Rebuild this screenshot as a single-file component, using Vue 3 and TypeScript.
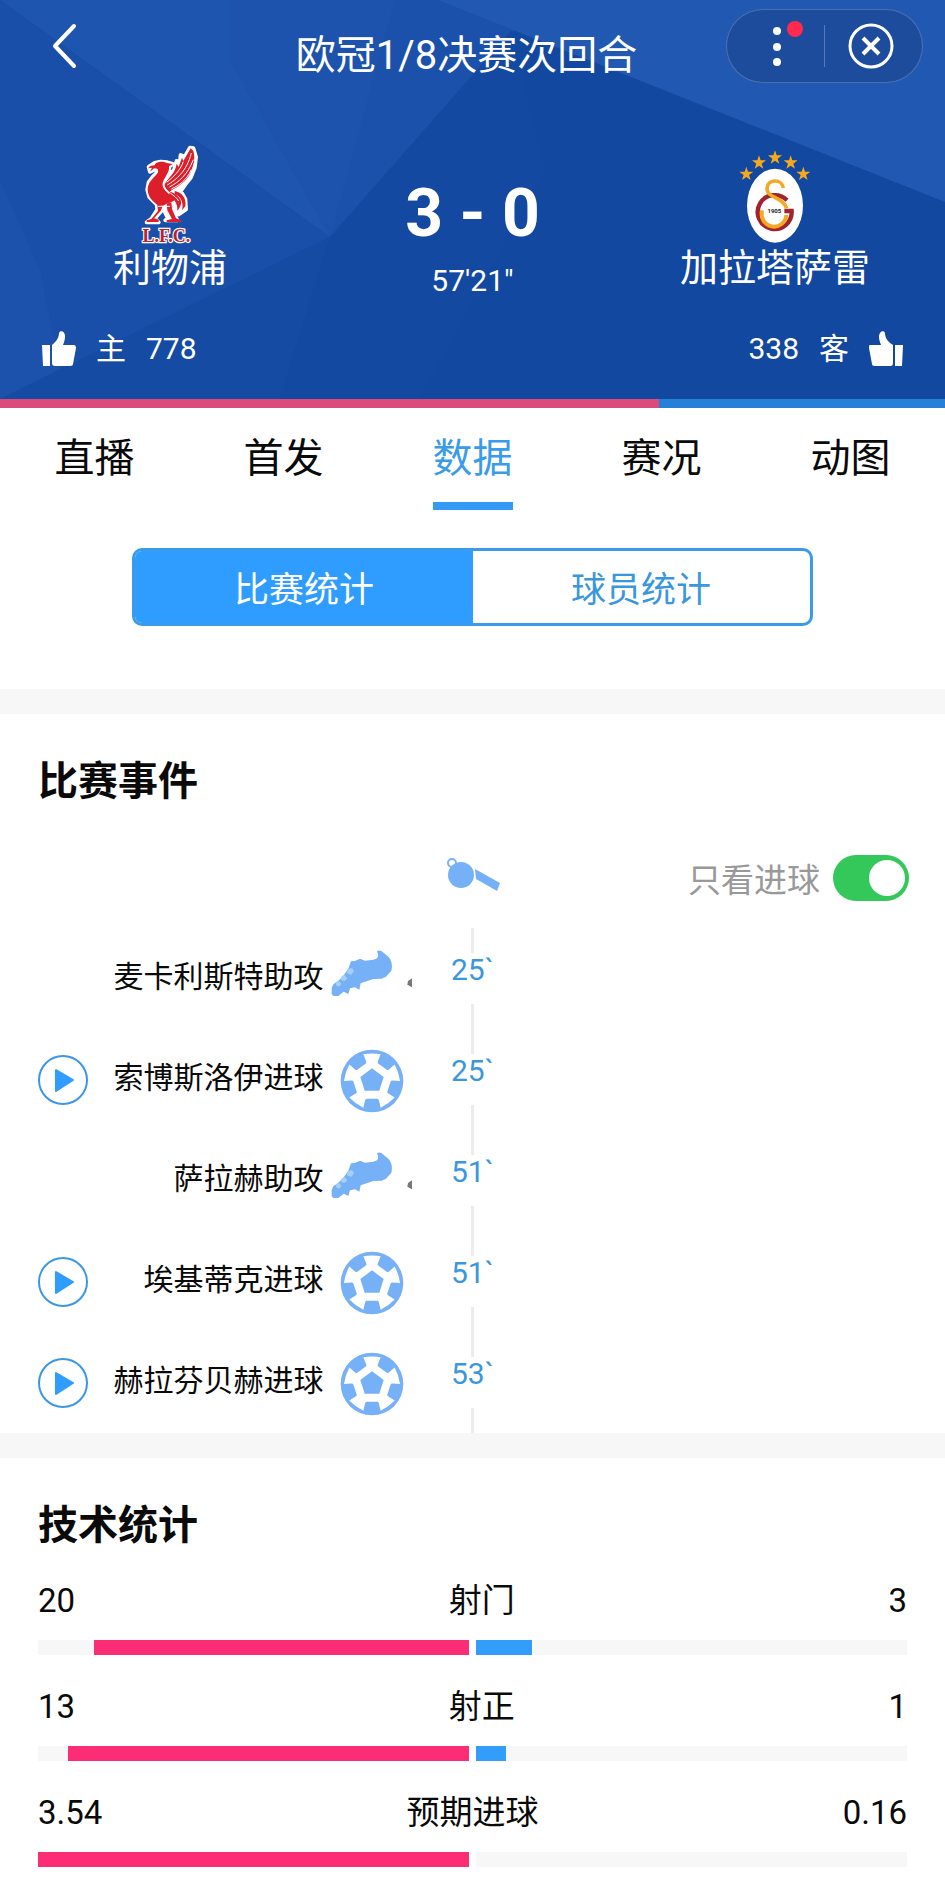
<script setup lang="ts">
import { ref } from 'vue'

interface MatchEvent {
  id: number
  text: string
  kind: 'goal' | 'assist'
  minute: number
}

interface Stat {
  label: string
  home: string
  away: string
  homeShare: number
  awayShare: number
}

const tabs: string[] = ['直播', '首发', '数据', '赛况', '动图']
const activeTab = ref('数据')

const views: string[] = ['比赛统计', '球员统计']
const activeView = ref('比赛统计')

const goalsOnly = ref(true)
const homeVotes = ref(778)
const awayVotes = ref(338)

const events: MatchEvent[] = [
  { id: 1, text: '麦卡利斯特助攻', kind: 'assist', minute: 25 },
  { id: 2, text: '索博斯洛伊进球', kind: 'goal', minute: 25 },
  { id: 3, text: '萨拉赫助攻', kind: 'assist', minute: 51 },
  { id: 4, text: '埃基蒂克进球', kind: 'goal', minute: 51 },
  { id: 5, text: '赫拉芬贝赫进球', kind: 'goal', minute: 53 },
]

const stats: Stat[] = [
  { label: '射门', home: '20', away: '3', homeShare: 87, awayShare: 13 },
  { label: '射正', home: '13', away: '1', homeShare: 93, awayShare: 7 },
  { label: '预期进球', home: '3.54', away: '0.16', homeShare: 100, awayShare: 0 },
]

const stars: string[] = ['106 129', '144 95', '192 80', '239 95', '277 129']
const spokes: number[] = [0, 72, 144, 216, 288]
</script>

<template>
  <div class="page">
    <header class="hero">
      <svg class="facets" viewBox="0 0 945 399" preserveAspectRatio="none" aria-hidden="true">
        <rect width="945" height="399" fill="#1248a0" />
        <path d="M330 237L0 399H280Z" fill="#164ba4" />
        <path d="M0 0L330 237L0 399Z" fill="#1a4fa9" />
        <path d="M0 180L40 270L60 369L0 399Z" fill="#1c52ab" />
        <path d="M0 0H440L515 30L330 237Z" fill="#1e55ae" />
        <path d="M230 60L330 237L395 0H230Z" fill="#1d53ad" />
        <path d="M395 0H440L515 30L330 237Z" fill="#1b51ab" />
        <path d="M512 30L525 90L545 170L420 399H280L330 237Z" fill="#1349a1" />
        <path d="M438 0H945V202Z" fill="#2158b1" />
      </svg>

      <div class="bar">
        <button class="back" type="button" aria-label="返回">
          <svg width="26" height="48" viewBox="0 0 26 48" aria-hidden="true">
            <path d="M23 4L4 24L23 44" fill="none" stroke="#fff" stroke-width="4" stroke-linecap="round" stroke-linejoin="round" />
          </svg>
        </button>
        <h1 class="title">欧冠1/8决赛次回合</h1>
        <div class="capsule">
          <button class="cap-btn" type="button" aria-label="更多">
            <svg width="97" height="72" viewBox="0 0 97 72" aria-hidden="true">
              <g fill="#fff">
                <circle cx="50" cy="21" r="4" />
                <circle cx="50" cy="37" r="4" />
                <circle cx="50" cy="52" r="4" />
              </g>
              <circle cx="68" cy="19" r="8" fill="#ff2a4d" />
            </svg>
          </button>
          <span class="cap-line"></span>
          <button class="cap-btn" type="button" aria-label="关闭">
            <svg width="97" height="72" viewBox="0 0 97 72" aria-hidden="true">
              <g fill="none" stroke="#fff">
                <circle cx="46" cy="36" r="21" stroke-width="3" />
                <path d="M38 28L54 44M54 28L38 44" stroke-width="4" />
              </g>
            </svg>
          </button>
        </div>
      </div>

      <div class="match">
        <div class="team">
          <svg width="60" height="102" viewBox="96 42 180 306" role="img" aria-label="利物浦队徽">
            <g stroke-linejoin="round">
              <path d="M140 96L158 92L178 94L194 99L184 106C184 120 176 132 166 142L198 118L206 90L216 94L218 72L230 78L246 50L256 52L264 78L260 110L248 140L232 160L218 180L232 205L234 235L212 250L204 234L194 216L180 222L192 236L208 268H172L180 262L164 228L160 240L140 262L152 274H116L130 264L148 236L146 220L124 198L118 176L122 154L136 136L150 122L148 112L126 122L122 108Z" fill="#fff" stroke="#fff" stroke-width="12" />
              <g fill="#dc1f2b">
                <path d="M142 98C152 90 168 92 176 96L194 99L183 106C186 124 168 140 164 156C162 170 172 180 184 190L202 206C190 214 182 216 176 218L166 224H152C134 212 120 198 119 176C119 154 136 142 146 130C151 124 152 118 148 113L138 112L126 122L132 110L120 112L128 104L140 103Z" />
                <path d="M170 160C180 140 202 128 206 98L212 108L222 80L226 90L248 52L256 60C262 82 258 98 250 118C244 138 230 152 216 162C204 172 192 174 184 184C176 178 170 172 170 160Z" />
                <path d="M184 182C196 184 208 190 216 204C224 216 216 230 208 240C210 220 200 204 184 194ZM200 180C222 184 236 202 232 226L222 238C228 214 218 196 200 188Z" />
                <path d="M148 220L164 226L158 240L138 262L152 266V273H116V268L130 264L150 240ZM176 218L190 214L192 234L204 262L220 268V273H176V268L192 264L178 238Z" />
              </g>
              <g fill="none" stroke="#fff" stroke-width="3">
                <path d="M178 162C204 146 236 122 250 66M184 168C212 154 238 132 256 86M190 174C212 164 236 148 250 116M176 154C196 138 216 120 226 92M170 168C176 184 200 190 212 210M150 226H186" />
              </g>
            </g>
            <text class="crest-name" x="175" y="332" text-anchor="middle">L.F.C.</text>
          </svg>
          <span class="team-name">利物浦</span>
        </div>
        <div class="result">
          <strong class="score">3 - 0</strong>
          <span class="clock">57'21"</span>
        </div>
        <div class="team">
          <svg width="72" height="102" viewBox="84 42 216 306" role="img" aria-label="加拉塔萨雷队徽">
            <g fill="#f8a91b">
              <path v-for="s in stars" :key="s" :transform="`translate(${s})`" d="M0 -22L5 -7H21L8 3L13 18L0 9L-13 18L-8 3L-21 -7H-5Z" />
            </g>
            <ellipse cx="192" cy="224" rx="84" ry="111" fill="#fff" />
            <g fill="none">
              <path d="M228 208A51 51 0 1 0 242 240H220" stroke="#a02430" stroke-width="13" />
              <path d="M154 238A37 37 0 1 0 226 252" stroke="#f6a822" stroke-width="12" />
              <path d="M217 171C214 144 170 142 168 172C167 202 216 196 227 232" stroke="#f6a822" stroke-width="11" />
            </g>
            <text class="crest-year" x="190" y="246" text-anchor="middle">1905</text>
          </svg>
          <span class="team-name">加拉塔萨雷</span>
        </div>
      </div>

      <div class="votes">
        <button class="vote" type="button" @click="homeVotes++">
          <svg width="34" height="36" viewBox="0 0 34 36" fill="#fff" aria-hidden="true">
            <path d="M0 14H8V35H1ZM10 14C15 10 17 6 17 2C18 -1 23 0 23 5C23 9 22 11 21 14H32C33 14 34 15 34 17L31 33C31 34 30 35 28 35H13C11 35 10 34 10 32Z" />
          </svg>
          <span>主</span>
          <span>{{ homeVotes }}</span>
        </button>
        <button class="vote" type="button" @click="awayVotes++">
          <span>{{ awayVotes }}</span>
          <span>客</span>
          <svg width="34" height="36" viewBox="0 0 34 36" fill="#fff" aria-hidden="true">
            <path d="M26 14H34L33 35H26ZM24 14C19 11 16 7 16 2C15 -1 10 0 10 6C10 9 11 11 12 14H1C0 14 0 15 0 17L3 33C3 34 4 35 6 35H22C23 35 24 34 24 32Z" />
          </svg>
        </button>
      </div>
    </header>

    <div class="share">
      <span class="share-home" :style="{ flexGrow: homeVotes }"></span>
      <span class="share-away" :style="{ flexGrow: awayVotes }"></span>
    </div>

    <nav class="tabs">
      <button
        v-for="t in tabs"
        :key="t"
        type="button"
        class="tab"
        :class="{ active: t === activeTab }"
        @click="activeTab = t"
      >
        <span>{{ t }}</span>
      </button>
    </nav>

    <div class="switcher">
      <button
        v-for="v in views"
        :key="v"
        type="button"
        class="segment"
        :class="{ active: v === activeView }"
        @click="activeView = v"
      >
        {{ v }}
      </button>
    </div>

    <section class="section">
      <h2 class="heading">比赛事件</h2>
      <div class="row filter-row">
        <svg class="whistle" width="54" height="42" viewBox="0 0 54 42" fill="#76b1f7" aria-hidden="true">
          <circle cx="6" cy="6" r="4" fill="none" stroke="#76b1f7" stroke-width="2" />
          <circle cx="15" cy="18" r="13" />
          <path d="M29 12L54 26L51 34L30 22Z" />
        </svg>
        <label class="filter" for="goals-only">
          <span>只看进球</span>
          <input id="goals-only" v-model="goalsOnly" class="toggle" type="checkbox" role="switch" />
        </label>
      </div>
      <div v-for="e in events" :key="e.id" class="row event">
        <div class="side">
          <button v-if="e.kind === 'goal'" class="play" type="button" :aria-label="`播放${e.text}`">
            <svg width="52" height="52" viewBox="0 0 52 52" aria-hidden="true">
              <circle cx="26" cy="26" r="24" fill="none" stroke="#3a97e6" stroke-width="2" />
              <path d="M19 16L36 26L19 37Z" fill="#2f9dff" stroke="#2f9dff" stroke-width="2" stroke-linejoin="round" />
            </svg>
          </button>
          <span class="what">{{ e.text }}</span>
          <svg v-if="e.kind === 'goal'" class="kind" width="82" height="66" viewBox="0 0 246 198" aria-hidden="true">
            <g transform="translate(126 102)">
              <circle r="94" fill="#76b1f7" />
              <path d="M0 -66L63 -20L39 53H-39L-63 -20Z" fill="#fff" />
              <path v-for="a in spokes" :key="a" :transform="`rotate(${a})`" d="M-26 -80Q0 -85 26 -80L17 -58V-42H-17V-58Z" fill="#fff" />
              <path d="M0 -38L35 -12L22 29H-22L-35 -12Z" fill="#76b1f7" />
            </g>
          </svg>
          <svg v-else class="kind" width="82" height="66" viewBox="0 0 246 198" aria-hidden="true">
            <path d="M5 126L10 115L25 104L40 89L55 68L63 46L75 45L90 38L105 44L130 41C143 38 146 32 144 24L141 16Q148 11 155 16L175 32C186 44 188 60 184 74L168 92L155 98L130 99L92 112L88 131L75 124L60 127L55 144L41 137L25 150H10L5 144Z" fill="#76b1f7" />
            <path d="M53 70L66 66L72 76L63 87L51 82ZM35 90L45 88L52 98L43 105L33 102ZM19 108L28 106L34 114L27 122L18 118Z" fill="#a6d0fc" />
            <path d="M246 97L234 105L232 116L246 124Z" fill="#777" />
          </svg>
        </div>
        <div class="axis">
          <time class="minute">{{ e.minute }}`</time>
        </div>
      </div>
    </section>

    <section class="section">
      <h2 class="heading">技术统计</h2>
      <div v-for="s in stats" :key="s.label" class="stat">
        <div class="figures">
          <span>{{ s.home }}</span>
          <span>{{ s.label }}</span>
          <span>{{ s.away }}</span>
        </div>
        <div class="meters">
          <div class="meter home"><div class="fill" :style="{ width: s.homeShare + '%' }"></div></div>
          <div class="meter away"><div class="fill" :style="{ width: s.awayShare + '%' }"></div></div>
        </div>
      </div>
    </section>
  </div>
</template>

<style>
body {
  margin: 0;
  background: #fff;
}
</style>

<style scoped>
.page {
  font-family: Roboto, 'Noto Sans CJK SC', sans-serif;
  color: #0a0a0a;
  background: #fff;
}
button {
  margin: 0;
  padding: 0;
  border: 0;
  background: none;
  color: inherit;
  font: inherit;
  cursor: pointer;
}
svg {
  display: block;
  flex: none;
}
h1,
h2 {
  margin: 0;
}

.hero {
  position: relative;
  isolation: isolate;
  color: #fff;
}
.facets {
  position: absolute;
  inset: 0;
  z-index: -1;
  width: 100%;
  height: 100%;
}
.bar {
  display: grid;
  grid-template-columns: 1fr auto 1fr;
  align-items: center;
  padding: 8px 22px 0;
  height: 76px;
}
.back {
  justify-self: start;
  padding-left: 29px;
}
.title {
  font-size: 40px;
  font-weight: 400;
  line-height: 48px;
  padding: 20px 12px 0 0;
}
.capsule {
  justify-self: end;
  display: flex;
  align-items: center;
  border: 1px solid rgba(255, 255, 255, 0.2);
  border-radius: 38px;
  background: rgba(24, 50, 110, 0.3);
}
.cap-line {
  width: 1px;
  height: 42px;
  background: rgba(255, 255, 255, 0.25);
}
.match {
  display: grid;
  grid-template-columns: 36fr 28fr 36fr;
  padding-top: 61px;
}
.team,
.result {
  display: flex;
  flex-direction: column;
  align-items: center;
}
.team-name {
  font-size: 38px;
  line-height: 42px;
}
.crest-name {
  font: bold 54px 'Liberation Serif', serif;
  fill: #c01f2e;
  stroke: #fff;
  stroke-width: 7px;
  paint-order: stroke;
}
.crest-year {
  font: bold 18px Roboto, sans-serif;
  fill: #222;
}
.score {
  padding-top: 33px;
  font-size: 66px;
  line-height: 72px;
}
.clock {
  padding-top: 13px;
  font-size: 30px;
  line-height: 36px;
}
.votes {
  display: flex;
  justify-content: space-between;
  padding: 29px 42px 30px;
}
.vote {
  display: flex;
  align-items: center;
  gap: 20px;
  font-size: 30px;
  line-height: 41px;
}
.share {
  display: flex;
  height: 9px;
}
.share-home {
  flex-basis: 0;
  background: #dc4a7b;
}
.share-away {
  flex-basis: 0;
  background: #2580d8;
}

.tabs {
  display: grid;
  grid-template-columns: repeat(5, 1fr);
  justify-items: center;
}
.tab {
  padding-top: 21px;
  font-size: 40px;
  line-height: 60px;
}
.tab span {
  display: block;
  padding-bottom: 13px;
  border-bottom: 8px solid transparent;
}
.tab.active {
  color: #3a9bea;
}
.tab.active span {
  border-color: #339bf5;
}

.switcher {
  display: flex;
  width: 72%;
  margin: 38px auto 63px;
  border: 3px solid #3a9bea;
  border-radius: 10px;
  overflow: hidden;
  box-sizing: border-box;
}
.segment {
  flex: 1;
  padding-top: 8px;
  font-size: 35px;
  line-height: 64px;
  color: #3a97dd;
}
.segment.active {
  background: #2f9dff;
  color: #fff;
}

.section {
  border-top: 25px solid #f7f7f7;
}
.heading {
  padding: 38px 38px 16px;
  font-size: 40px;
  font-weight: 700;
  line-height: 60px;
}
.row {
  display: grid;
  grid-template-columns: 1fr 54px 1fr;
}
.filter-row {
  height: 100px;
  align-items: center;
}
.whistle {
  grid-column: 2;
}
.filter {
  display: flex;
  align-items: center;
  justify-content: flex-end;
  gap: 13px;
  padding-right: 36px;
  font-size: 33px;
  color: #999;
}
.toggle {
  appearance: none;
  flex: none;
  display: flex;
  justify-content: flex-start;
  width: 76px;
  height: 46px;
  margin: 0;
  padding: 5px 4px;
  box-sizing: border-box;
  border-radius: 23px;
  background: #ccc;
}
.toggle::before {
  content: '';
  width: 36px;
  height: 36px;
  border-radius: 50%;
  background: #fff;
}
.toggle:checked {
  justify-content: flex-end;
  background: #34c759;
}
.event {
  height: 101px;
}
.side {
  display: flex;
  align-items: center;
  padding: 0 34px 0 37px;
}
.what {
  margin-left: auto;
  padding: 0 6px 4px 0;
  font-size: 30px;
  line-height: 44px;
}
.axis {
  display: flex;
  align-items: center;
  justify-content: center;
  background: linear-gradient(#ececec, #ececec) center / 3px 100% no-repeat;
}
.minute {
  width: 50px;
  height: 51px;
  background: #fff;
  color: #3a97dd;
  font-size: 30px;
  line-height: 34px;
  text-align: center;
}

.stat {
  padding: 0 38px;
}
.stat + .stat {
  padding-top: 23px;
}
.figures {
  display: flex;
  justify-content: space-between;
  font-size: 33px;
  line-height: 58px;
}
.meters {
  display: grid;
  grid-template-columns: 1fr 1fr;
  gap: 7px;
  padding-top: 10px;
}
.meter {
  display: flex;
  height: 15px;
  background: #f7f7f7;
}
.home {
  justify-content: flex-end;
}
.home .fill {
  background: #fd2d75;
}
.away .fill {
  background: #339dfb;
}
</style>
